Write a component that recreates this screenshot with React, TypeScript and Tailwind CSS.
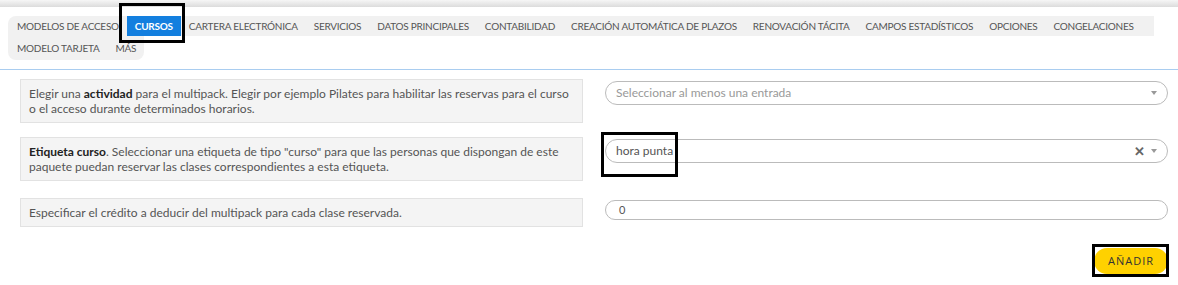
import React from 'react';

const tabsRow1 = [
  'MODELOS DE ACCESO',
  'CURSOS',
  'CARTERA ELECTRÓNICA',
  'SERVICIOS',
  'DATOS PRINCIPALES',
  'CONTABILIDAD',
  'CREACIÓN AUTOMÁTICA DE PLAZOS',
  'RENOVACIÓN TÁCITA',
  'CAMPOS ESTADÍSTICOS',
  'OPCIONES',
  'CONGELACIONES',
];
const tabsRow2 = ['MODELO TARJETA', 'MÁS'];

function Tab({ label, active }: { label: string; active?: boolean }) {
  if (active) {
    return (
      <div className="relative shrink-0">
        <span className="flex h-5 items-center whitespace-nowrap bg-[#137fdf] px-2 font-bold text-white">{label}</span>
        {/* highlight frame */}
        <div className="pointer-events-none absolute -left-[8px] -right-[4px] -top-[13px] -bottom-[7px] border-[3px] border-black" />
      </div>
    );
  }
  return <span className="flex shrink-0 items-center whitespace-nowrap px-2">{label}</span>;
}

function Chevron() {
  return (
    <svg width="6" height="4" viewBox="0 0 6 4" className="text-[#999]">
      <path d="M0 0 L6 0 L3 4 Z" fill="currentColor" />
    </svg>
  );
}

function HelpBox({ children }: { children: React.ReactNode }) {
  return (
    <div className="border border-[#e2e2e2] bg-[#f4f4f4] px-2 py-[6px] text-[12px] leading-[15px] text-[#555]">
      {children}
    </div>
  );
}

export default function App() {
  return (
    <div className="h-[285px] w-[1178px] overflow-hidden bg-white font-['Lato',sans-serif]">
      {/* top shadow */}
      <div className="h-[7px] bg-gradient-to-b from-[#f6f6f6] to-[#dcdcdc]" />

      {/* tabs */}
      <div className="pl-2 pt-[9px] text-[10px] tracking-[-0.25px] text-[#555]">
        <div className="flex h-5 w-[1146px] rounded-tl-lg bg-[#f1f1f1] pl-[1px]">
          {tabsRow1.map((t) => (
            <Tab key={t} label={t} active={t === 'CURSOS'} />
          ))}
        </div>
        <div className="flex h-6 w-[136px] rounded-b-lg bg-[#f1f1f1] pl-[1px]">
          {tabsRow2.map((t) => (
            <Tab key={t} label={t} />
          ))}
        </div>
      </div>

      <div className="mt-[9px] h-px bg-[#a9cdf0]" />

      {/* form */}
      <div className="flex flex-col gap-[14px] pl-[20px] pr-[10px] pt-[9px]">
        <div className="grid grid-cols-2 gap-[22px]">
          <HelpBox>
            Elegir una <b className="text-[#222]">actividad</b> para el multipack. Elegir por ejemplo Pilates para
            habilitar las reservas para el curso o el acceso durante determinados horarios.
          </HelpBox>
          <div className="mt-[2px] flex h-6 items-center justify-between rounded-full border border-[#bbb] px-[10px] text-[12px] text-[#999]">
            <span>Seleccionar al menos una entrada</span>
            <Chevron />
          </div>
        </div>

        <div className="grid grid-cols-2 gap-[22px]">
          <HelpBox>
            <b className="text-[#222]">Etiqueta curso</b>. Seleccionar una etiqueta de tipo "curso" para que las
            personas que dispongan de este paquete puedan reservar las clases correspondientes a esta etiqueta.
          </HelpBox>
          <div className="relative mt-[2px] flex h-6 items-center justify-between rounded-full border border-[#bbb] px-[10px] text-[12px] text-[#555]">
            <span>hora punta</span>
            <span className="flex items-center gap-[6px]">
              <span className="text-[13px] font-bold leading-none text-[#666]">✕</span>
              <Chevron />
            </span>
            <div className="pointer-events-none absolute -left-[5px] -top-[8px] h-[45px] w-[77px] border-[3px] border-black" />
          </div>
        </div>

        <div className="mt-[3px] grid grid-cols-2 gap-[22px]">
          <HelpBox>Especificar el crédito a deducir del multipack para cada clase reservada.</HelpBox>
          <div className="mt-[2px] flex h-5 items-center rounded-full border border-[#bbb] px-[13px] text-[11px] text-[#555]">
            0
          </div>
        </div>

        <div className="mt-[6px] flex justify-end">
          <div className="relative">
            <button className="h-[26px] rounded-full bg-[#ffd100] px-[14px] font-['Open_Sans',sans-serif] text-[11px] leading-[26px] tracking-[1px] text-[#333]">
              AÑADIR
            </button>
            <div className="pointer-events-none absolute -left-[2px] -right-[1px] -top-[3px] -bottom-[3px] border-[3px] border-black" />
          </div>
        </div>
      </div>
    </div>
  );
}
